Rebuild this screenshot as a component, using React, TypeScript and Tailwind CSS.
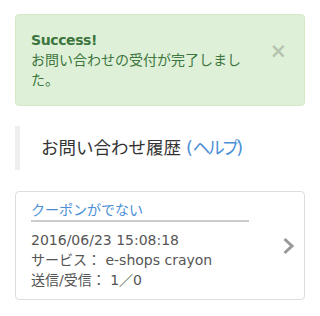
export default function App() {
  const font = { fontFamily: '"DejaVu Sans", "Noto Sans CJK JP", sans-serif' };

  return (
    <div className="w-[320px] bg-white px-[15px] pt-[14px] text-[14px] leading-[20px] text-[#333]" style={font}>
      {/* Success alert */}
      <div className="relative rounded-[4px] border border-[#d6e9c6] bg-[#dff0d8] py-[15px] pl-[15px] pr-[52px] text-[#3c763d]">
        <button className="absolute right-[17px] top-[26px] text-[21px] font-bold leading-[21px] text-black/20">
          ×
        </button>
        <div className="font-bold tracking-[-0.4px]">Success!</div>
        <div>お問い合わせの受付が完了しました。</div>
      </div>

      {/* Section heading */}
      <div className="mt-[20px] flex h-[44px] items-center border-l-[5px] border-[#eee] pl-[21px] text-[17.5px] text-[#333]">
        <span>お問い合わせ履歴</span>
        <span className="ml-[5px] text-[#4b8fd6]">
          (<span className="tracking-[-3px]">ヘルプ</span>)
        </span>
      </div>

      {/* History card */}
      <div className="relative mt-[21px] rounded-[4px] border border-[#ddd] px-[15px] pt-[8px] pb-[9px]">
        <a className="block w-[218px] border-b-2 border-[#ccc] text-[#4b8fd6]">クーポンがでない</a>
        <div className="mt-[8px] text-[#555]">
          <div>2016/06/23 15:08:18</div>
          <div>サービス： e-shops crayon</div>
          <div>送信/受信： 1／0</div>
        </div>
        <svg
          className="absolute right-[9px] top-1/2 -translate-y-1/2"
          width="13"
          height="17"
          viewBox="0 0 13 17"
          fill="none"
        >
          <polyline points="2.5,1.5 10,8.5 2.5,15.5" stroke="#999" strokeWidth="3" />
        </svg>
      </div>
    </div>
  );
}
